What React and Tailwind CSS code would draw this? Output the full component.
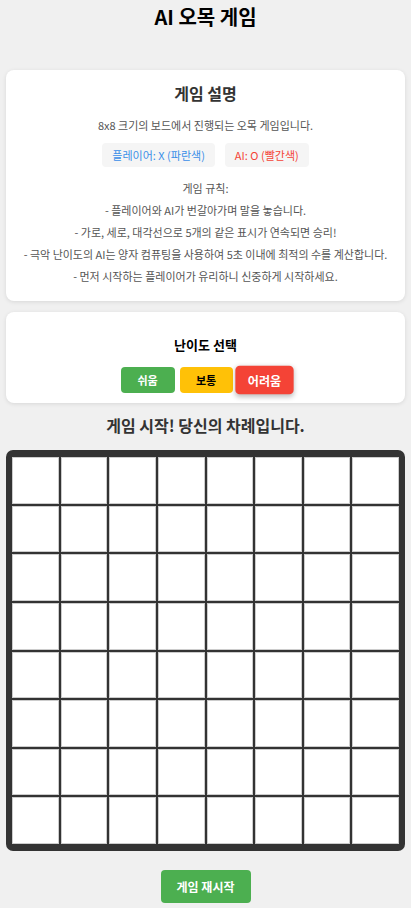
import React from "react";

const font = { fontFamily: '"Noto Sans CJK KR", "Noto Sans", sans-serif' };

const rules = [
  "- 플레이어와 AI가 번갈아가며 말을 놓습니다.",
  "- 가로, 세로, 대각선으로 5개의 같은 표시가 연속되면 승리!",
  "- 극악 난이도의 AI는 양자 컴퓨팅을 사용하여 5초 이내에 최적의 수를 계산합니다.",
  "- 먼저 시작하는 플레이어가 유리하니 신중하게 시작하세요.",
];

function Board() {
  const cells = Array.from({ length: 64 });
  return (
    <div className="mt-[14px] mx-[6px] rounded-[7px] bg-[#333] px-[6px] py-[7px]">
      <div className="grid grid-cols-8 gap-[2px]">
        {cells.map((_, i) => (
          <div key={i} className="aspect-square border border-[#ccc] bg-white" />
        ))}
      </div>
    </div>
  );
}

export default function App() {
  return (
    <div className="min-h-[908px] bg-[#f0f0f0] pb-[5px] text-center" style={font}>
      <h1 className="pt-[5px] text-[20px] font-bold leading-[24px] text-black">AI 오목 게임</h1>

      <div className="mx-[6px] mt-[41px] rounded-[8px] bg-white px-[10px] pt-[14px] pb-[14px] shadow-[0_1px_4px_rgba(0,0,0,0.1)]">
        <h2 className="text-[16px] font-bold leading-[18px] text-[#333]">게임 설명</h2>
        <p className="mt-[12px] text-[11px] leading-[22px] text-[#555]">8x8 크기의 보드에서 진행되는 오목 게임입니다.</p>
        <div className="mt-[7px] flex justify-center gap-[10px] text-[11px]">
          <span className="rounded-[4px] bg-[#f5f5f5] px-[10px] leading-[24px] text-[#3b8fe8]">플레이어: X (파란색)</span>
          <span className="rounded-[4px] bg-[#f5f5f5] px-[10px] leading-[24px] text-[#f44336]">AI: O (빨간색)</span>
        </div>
        <p className="mt-[10px] text-[11px] leading-[22px] text-[#555]">게임 규칙:</p>
        {rules.map((r) => (
          <p key={r} className="text-[11px] leading-[22px] text-[#555]">{r}</p>
        ))}
      </div>

      <div className="mx-[6px] mt-[11px] rounded-[8px] bg-white pt-[24px] pb-[10px] shadow-[0_1px_4px_rgba(0,0,0,0.1)]">
        <h3 className="text-[13px] font-bold leading-[18px] text-black">난이도 선택</h3>
        <div className="mt-[13px] flex justify-center gap-[5px]">
          <button className="h-[26px] w-[54px] rounded-[4px] bg-[#4caf50] text-[11px] font-bold text-white">쉬움</button>
          <button className="h-[26px] w-[53px] rounded-[4px] bg-[#ffc107] text-[11px] font-bold text-black">보통</button>
          <button className="h-[26px] w-[53px] scale-110 rounded-[4px] bg-[#f44336] text-[11px] font-bold text-white shadow-[0_2px_5px_rgba(0,0,0,0.25)]">어려움</button>
        </div>
      </div>

      <p className="mt-[11px] text-[16px] font-bold leading-[22px] text-[#333]">게임 시작! 당신의 차례입니다.</p>

      <Board />

      <button className="mt-[19px] h-[33px] w-[90px] rounded-[4px] bg-[#4caf50] text-[12px] font-bold text-white">게임 재시작</button>
    </div>
  );
}
